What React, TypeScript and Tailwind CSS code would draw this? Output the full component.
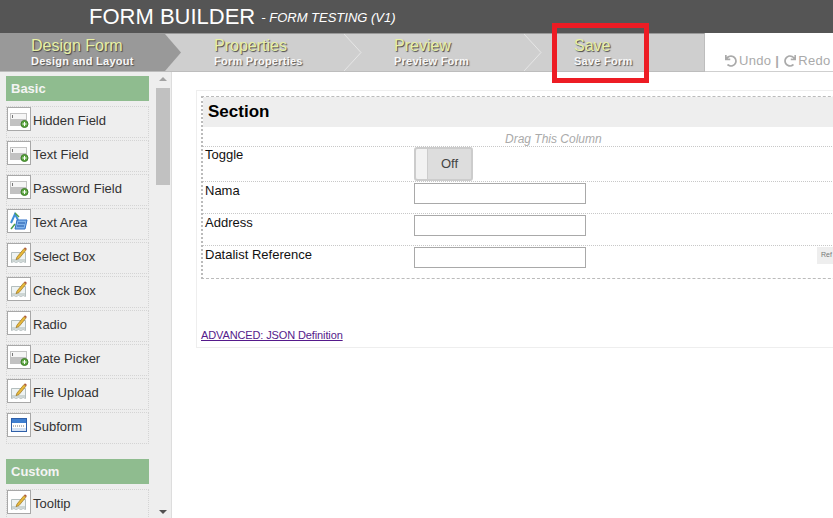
import { FaUndo, FaRedo } from 'react-icons/fa'

const FONT = "font-['Liberation_Sans',Arial,sans-serif]"

function FieldIcon() {
	return (
		<svg width="22" height="22" viewBox="0 0 22 22">
			<rect x="2.500" y="5.500" width="16" height="12" fill="#f6f6f6" stroke="#c4c4c4" />
			<rect x="2" y="11" width="17" height="7" fill="#c2c2c2" />
			<path d="M4.500 7v3" stroke="#777" />
			<circle cx="16.500" cy="16" r="3.500" fill="#5aa63e" stroke="#3f7f2a" />
			<path d="M14.500 16h4M16.500 14v4" stroke="#fff" />
		</svg>
	)
}

function EditIcon() {
	return (
		<svg width="22" height="22" viewBox="0 0 22 22">
			<path d="M3.500 8.500h14v10l-2.300-1-2.300 1-2.400-1-2.300 1-2.300-1-2.400 1z" fill="#eef3f3" stroke="#b4bebe" />
			<path d="M4 15h13v3l-2-1-2 1-2-1-2 1-2-1-3 1z" fill="#cdd6d4" />
			<path d="M9 13l7-8.500 2 1.600-7 8.500-3 1z" fill="#e8b93a" stroke="#9a7420" strokeWidth=".7" />
			<path d="M16 4.500l1-1.200 2 1.600-1 1.200z" fill="#b05a3a" />
		</svg>
	)
}

function AreaIcon() {
	return (
		<svg width="22" height="22" viewBox="0 0 22 22">
			<path d="M3 13l4-9 3 6" fill="none" stroke="#3f8fd8" strokeWidth="2" />
			<path d="M7 3l4 4" stroke="#4c9e4c" strokeWidth="1.500" />
			<path d="M9 10h10l-2 9H7z" fill="#7fb2ea" stroke="#2f6fc4" />
			<path d="M10 13h7M9 16h7" stroke="#1f56a8" />
			<path d="M3 19l4-5" stroke="#4c9e4c" strokeWidth="1.500" />
		</svg>
	)
}

function SubformIcon() {
	return (
		<svg width="22" height="22" viewBox="0 0 22 22">
			<rect x="3.500" y="4.500" width="15" height="13" fill="#fff" stroke="#2f5fa8" />
			<rect x="4" y="5" width="14" height="4" fill="#3f7fd0" />
			<path d="M5 12h12" stroke="#777" strokeDasharray="1 1" />
			<rect x="4" y="14" width="14" height="3" fill="#d4e2f4" />
		</svg>
	)
}

function PaletteItem({ label, icon }: { label: string; icon: React.ReactNode }) {
	return (
		<div className="flex h-[32px] shrink-0 items-start gap-[2px] border border-dotted border-[#d4d4d4]">
			<div className="flex h-[24px] w-[24px] items-center justify-center border border-[#a8a8a8] bg-white">
				{icon}
			</div>
			<span className="pt-[6px] text-[13px] leading-[15px] text-[#333]">{label}</span>
		</div>
	)
}

function GroupHeader({ label }: { label: string }) {
	return (
		<div className="flex h-[25px] shrink-0 items-center bg-[#8fbc8f] pl-[5px] text-[13px] font-bold text-[#f4f4f4]">
			{label}
		</div>
	)
}

function Step({ title, sub, className, active, last }: { title: string; sub: string; className: string; active?: boolean; last?: boolean }) {
	return (
		<div className={`relative h-full shrink-0 pt-[2px] ${className}`}>
			{active ? (
				<div className="absolute inset-0 bg-[#999] [clip-path:polygon(0_0,165px_0,181px_50%,165px_100%,0_100%)]" />
			) : null}
			<div className="relative text-[16px] leading-[19px] text-[#e8f0a4] [text-shadow:1px_1px_1px_#444]">{title}</div>
			<div className="relative text-[11px] font-bold leading-[12px] tracking-[0.25px] text-[#f8f8f8] [text-shadow:1px_1px_1px_#555]">{sub}</div>
			{active || last ? null : (
				<svg className="absolute right-0 top-0" width="20" height="37" viewBox="0 0 20 37">
					<path d="M1 0l17 18.500L1 37" fill="none" stroke="#e6e6e6" />
				</svg>
			)}
		</div>
	)
}

function FormRow({ label, height, labelPad, children }: { label: string; height: string; labelPad: string; children: React.ReactNode }) {
	return (
		<div className={`flex border-t border-dotted border-[#c8c8c8] ${height}`}>
			<div className={`w-[211px] shrink-0 pl-[2px] text-[13px] leading-[16px] text-[#111] ${labelPad}`}>{label}</div>
			{children}
		</div>
	)
}

function TextInput() {
	return <div className="mt-[1px] h-[21px] w-[172px] border border-[#a9a9a9] bg-white" />
}

export default function App() {
	const palette = [
		{ label: 'Hidden Field', icon: <FieldIcon /> },
		{ label: 'Text Field', icon: <FieldIcon /> },
		{ label: 'Password Field', icon: <FieldIcon /> },
		{ label: 'Text Area', icon: <AreaIcon /> },
		{ label: 'Select Box', icon: <EditIcon /> },
		{ label: 'Check Box', icon: <EditIcon /> },
		{ label: 'Radio', icon: <EditIcon /> },
		{ label: 'Date Picker', icon: <FieldIcon /> },
		{ label: 'File Upload', icon: <EditIcon /> },
		{ label: 'Subform', icon: <SubformIcon /> },
	]

	return (
		<div className={`relative flex h-[518px] w-[833px] flex-col overflow-hidden bg-white ${FONT}`}>
			<div className="flex h-[33px] shrink-0 items-center bg-[#555] pl-[89px] text-white">
				<span className="text-[22px] leading-none">FORM BUILDER</span>
				<span className="ml-[6px] mt-[3px] text-[13px] italic"> - FORM TESTING (V1)</span>
			</div>

			<div className="flex h-[39px] shrink-0">
				<div className="flex w-[705px] shrink-0 border-r border-b border-t border-[#bdbdbd] border-t-[#999] bg-[#cfcfcf]">
					<Step title="Design Form" sub="Design and Layout" className="w-[214px] pl-[31px]" active />
					<Step title="Properties" sub="Form Properties" className="w-[149px]" />
					<Step title="Preview" sub="Preview Form" className="w-[180px] pl-[31px]" />
					<Step title="Save" sub="Save Form" className="w-[130px] pl-[31px]" last />
				</div>
				<div className="flex flex-1 items-end border-b border-[#cfcfcf] pb-[2px] pl-[20px] text-[13px] leading-[16px] tracking-[0.3px] text-[#aaa]">
					<span className="flex items-center gap-[2px]">
						<FaUndo size={12} />
						Undo
					</span>
					<span className="ml-[4px] mr-[5px] font-bold">|</span>
					<span className="flex items-center gap-[2px]">
						<FaRedo size={12} />
						Redo
					</span>
				</div>
			</div>

			<div className="flex min-h-0 flex-1">
				<div className="flex w-[172px] shrink-0 border-r border-[#ddd] bg-[#eee]">
					<div className="flex w-[149px] shrink-0 flex-col overflow-hidden pl-[6px] pt-[4px]">
						<GroupHeader label="Basic" />
						<div className="mt-[5px] flex flex-col gap-[2px]">
							{palette.map((item) => (
								<PaletteItem key={item.label} label={item.label} icon={item.icon} />
							))}
						</div>
						<div className="mt-[15px]">
							<GroupHeader label="Custom" />
						</div>
						<div className="mt-[5px] flex flex-col">
							<PaletteItem label="Tooltip" icon={<EditIcon />} />
						</div>
					</div>
					<div className="ml-[7px] flex w-[14px] shrink-0 flex-col items-center">
						<div className="mt-[5px] h-0 w-0 border-x-[4px] border-b-[4px] border-x-transparent border-b-[#a3a3a3]" />
						<div className="mt-[7px] h-[97px] w-full bg-[#c1c1c1]" />
						<div className="mt-auto mb-[4px] h-0 w-0 border-x-[4px] border-t-[4px] border-x-transparent border-t-[#505050]" />
					</div>
				</div>

				<div className="min-w-0 flex-1 overflow-hidden pl-[24px] pt-[18px]">
					<div className="h-[258px] w-[700px] border border-[#eee] px-[4px] pt-[5px]">
						<div className="h-[183px] border border-dashed border-[#bbb] [border-left-style:dotted] border-l-2">
							<div className="flex h-[30px] items-center bg-[#eee] pl-[5px] text-[17px] font-bold text-black">Section</div>
							<div className="h-[19px] pl-[302px] pt-[5px] text-[12px] italic leading-[15px] text-[#aaa]">Drag This Column</div>
							<FormRow label="Toggle" height="h-[35px]" labelPad="pt-0">
								<div className="flex h-[34px] w-[59px] rounded-[3px] border-2 border-[#ccc] bg-[#ddd]">
									<div className="h-full w-[12px] rounded-l-[2px] border-r border-[#ccc] bg-[#f2f2f2]" />
									<div className="flex-1 pt-[7px] text-center text-[13px] leading-[16px] text-[#444]">Off</div>
								</div>
							</FormRow>
							<FormRow label="Nama" height="h-[32px]" labelPad="pt-[1px]">
								<TextInput />
							</FormRow>
							<FormRow label="Address" height="h-[32px]" labelPad="pt-[1px]">
								<TextInput />
							</FormRow>
							<FormRow label="Datalist Reference" height="h-[33px]" labelPad="pt-[1px]">
								<TextInput />
								<div className="ml-[231px] mt-[1px] flex h-[17px] flex-1 items-center bg-[#eee] pl-[4px] text-[7px] text-[#777]">Ref</div>
							</FormRow>
						</div>
						<a href="#" className="mt-[50px] block text-[11px] leading-[13px] tracking-[-0.12px] text-[#551a8b] underline">
							ADVANCED: JSON Definition
						</a>
					</div>
				</div>
			</div>

			<div className="absolute left-[552px] top-[23px] h-[60px] w-[97px] border-[5px] border-[#ed1c24]" />
		</div>
	)
}
